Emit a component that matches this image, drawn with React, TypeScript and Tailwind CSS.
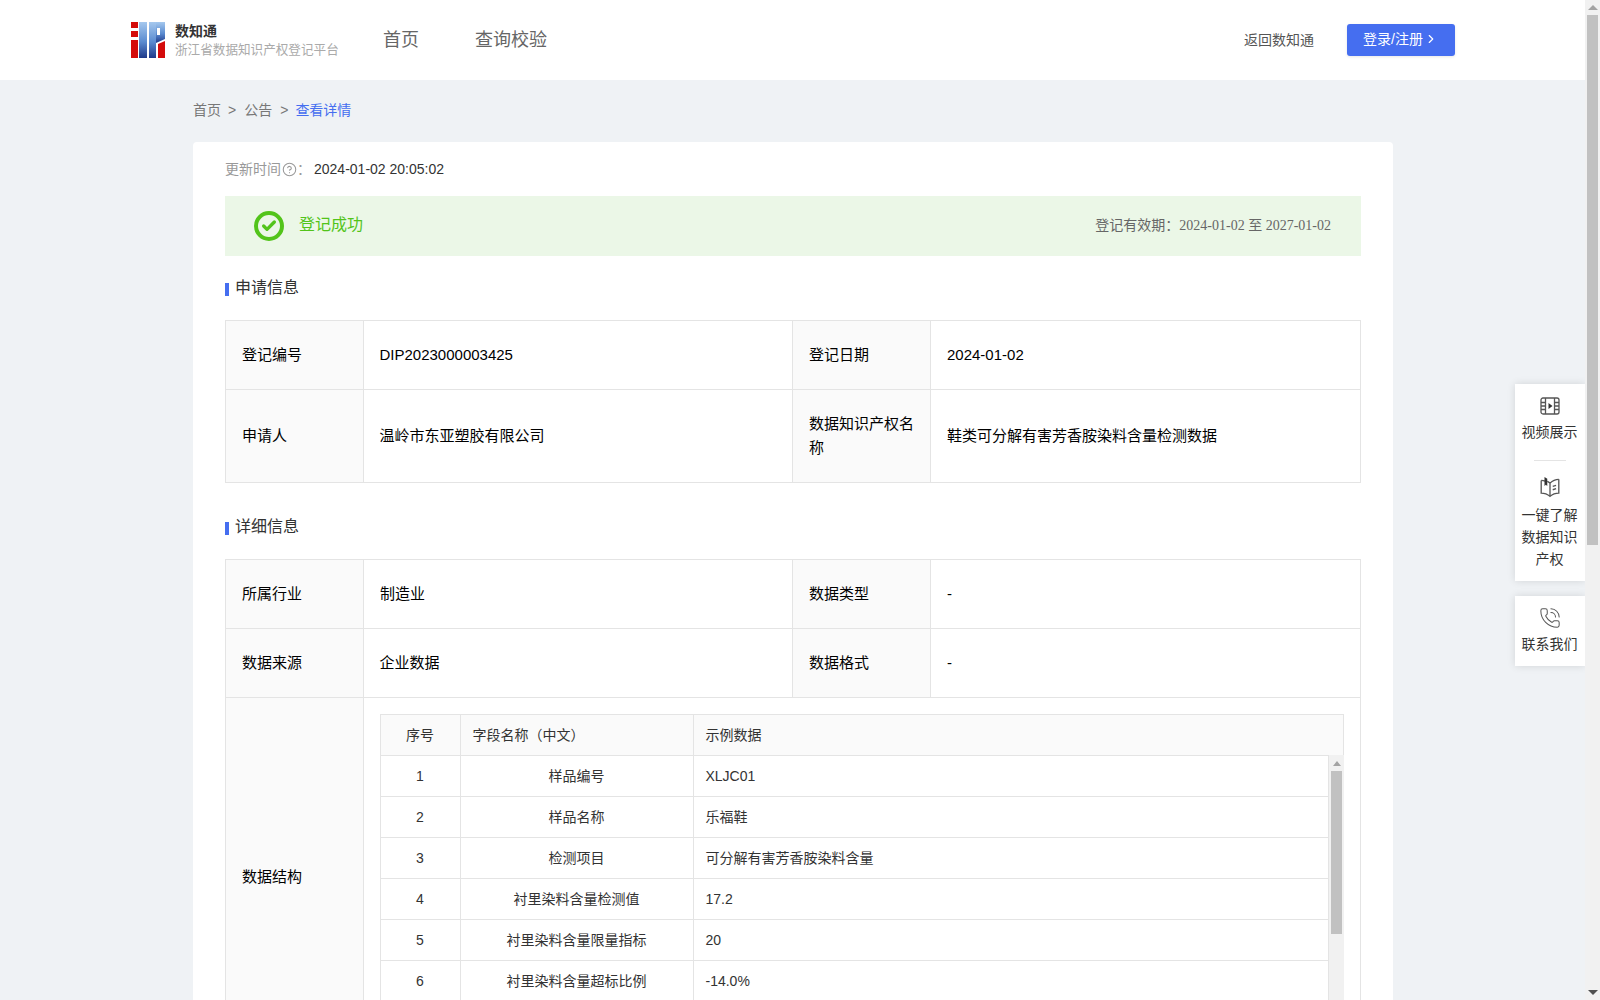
import { ChevronRight, Check, CircleHelp, PhoneCall } from "lucide-react";

const font = "font-['Liberation_Sans','Noto_Sans_CJK_SC',sans-serif]";

const sampleRows = [
  ["1", "样品编号", "XLJC01"],
  ["2", "样品名称", "乐福鞋"],
  ["3", "检测项目", "可分解有害芳香胺染料含量"],
  ["4", "衬里染料含量检测值", "17.2"],
  ["5", "衬里染料含量限量指标", "20"],
  ["6", "衬里染料含量超标比例", "-14.0%"],
];

function Logo() {
  return (
    <svg width="35" height="36" viewBox="0 0 35 36" className="shrink-0">
      <defs>
        <linearGradient id="lb" x1="0" y1="0" x2="0" y2="1">
          <stop offset="0" stopColor="#a5c8ee" />
          <stop offset="0.55" stopColor="#5a8bd0" />
          <stop offset="1" stopColor="#1f3a8a" />
        </linearGradient>
      </defs>
      <rect x="0" y="0" width="7" height="6" fill="#d40b0b" />
      <rect x="0" y="9" width="7" height="6" fill="#d40b0b" />
      <rect x="0" y="18" width="7" height="18" fill="#d40b0b" />
      <rect x="8" y="0" width="8" height="36" fill="url(#lb)" />
      <rect x="18" y="0" width="7" height="36" fill="url(#lb)" />
      <path d="M25 0h9v17l-9 4zM26 6v7h3V6z" fill="url(#lb)" fillRule="evenodd" />
      <path d="M27 36V22l7-3v17z" fill="#d40b0b" />
    </svg>
  );
}

function SectionTitle({ children, className }: { children: string; className: string }) {
  return (
    <div className={"flex items-center gap-[6px] text-base leading-6 text-[#333] " + className}>
      <span className="w-1 h-[13px] bg-[#456ef0] mt-[2px]"></span>
      <span>{children}</span>
    </div>
  );
}

function Cell({ label, tight, children }: { label?: boolean; tight?: boolean; children: string }) {
  return (
    <td className={"border border-[#e4e4e4] pb-[1px] pr-4 " + (tight ? "pl-[15.5px] " : "pl-4 ") + (label ? "bg-[#fafafa]" : "")}>{children}</td>
  );
}

function PageScrollbar() {
  return (
    <div className="w-[15px] h-full shrink-0 bg-[#f1f1f1] flex flex-col items-center relative">
      <div className="h-[15px] w-full flex items-center justify-center">
        <div className="w-0 h-0 border-x-[5px] border-x-transparent border-b-[5px] border-b-[#a3a3a3]"></div>
      </div>
      <div className="w-[11px] h-[530px] bg-[#c1c1c1]"></div>
      <div className="mt-auto h-[15px] w-full flex items-center justify-center">
        <div className="w-0 h-0 border-x-[5px] border-x-transparent border-t-[5px] border-t-[#505050]"></div>
      </div>
    </div>
  );
}

function SideButtons() {
  return (
    <div className="absolute right-0 top-[384px] w-[70px] flex flex-col gap-[15px] pr-[1px] text-sm leading-[22px] text-[#333] text-center">
      <div className="bg-white shadow-[0_0_8px_rgba(0,0,0,0.12)] -mr-[1px] pr-[1px] pt-[13px] pb-[11px]">
        <svg width="20" height="18" viewBox="0 0 20 18" fill="none" stroke="#555" strokeWidth="1.3" className="mx-auto">
          <rect x="1" y="1" width="18" height="16" rx="2" />
          <path d="M5.500 1v16M14.500 1v16M1 5.500h4.500M1 9h4.500M1 12.500h4.500M14.500 5.500H19M14.500 9H19M14.500 12.500H19" />
          <path d="M8.500 6l4 3-4 3z" fill="#333" stroke="none" />
        </svg>
        <div className="mt-[6px]">视频展示</div>
        <div className="w-8 h-px bg-[#e4e4e4] mx-auto mt-[17px] mb-[15px]"></div>
        <svg width="22" height="22" viewBox="0 0 20 20" fill="none" stroke="#555" strokeWidth="1.2" className="mx-auto">
          <path d="M2 4c1.500 0 2.500.2 3.500.6M18 3c-3 0-5.500 1-8 3.500C9 5.500 8 5 7.500 4.800" />
          <path d="M2 4v11.500c3 0 5.500.8 8 3 2.500-2.200 5-3 8-3V3" />
          <path d="M10 6.500v12M12.500 9.500l3-1M12.500 12.500l3-1" />
          <path d="M5 1l2.500 1.500v6.500L6.200 8 5 9z" fill="#333" stroke="none" />
        </svg>
        <div className="mt-[6px]">一键了解<br />数据知识<br />产权</div>
      </div>
      <div className="bg-white shadow-[0_0_8px_rgba(0,0,0,0.12)] -mr-[1px] pr-[1px] pt-[11px] pb-[11px]">
        <PhoneCall className="w-[22px] h-[22px] mx-auto text-[#555]" strokeWidth={1.1} />
        <div className="mt-[4px]">联系我们</div>
      </div>
    </div>
  );
}

export default function App() {
  return (
    <div className={"h-screen flex overflow-hidden bg-[#eff2f5] " + font}>
      <div className="flex-1 min-w-0 relative overflow-hidden">
        <header className="h-20 bg-white flex items-center pl-[131px] pr-[130px]">
          <Logo />
          <div className="ml-[9px] w-[165px] mb-[1px]">
            <div className="text-sm leading-5 font-bold text-[#333]">数知通</div>
            <div className="text-[12.6px] leading-[18px] text-[#aaa] whitespace-nowrap">浙江省数据知识产权登记平台</div>
          </div>
          <nav className="flex gap-[56px] ml-[43px] text-lg text-[#666]">
            <span>首页</span>
            <span>查询校验</span>
          </nav>
          <span className="ml-auto text-sm text-[#555] pb-[1px]">返回数知通</span>
          <button className="ml-[33px] w-[108px] h-8 bg-[#456ef0] rounded-[3px] text-white text-sm flex items-center justify-center gap-[1px] pb-[2px] pr-[1px] shadow-[0_1px_3px_rgba(0,0,0,0.1)]">
            登录/注册
            <ChevronRight className="w-[14px] h-[14px]" strokeWidth={2} />
          </button>
        </header>

        <main className="ml-[193px] w-[1200px]">
          <div className="h-[62px] flex items-center gap-2 -ml-px pb-[2px] text-sm text-[#777]">
            <span className="ml-px -mr-px">首页</span>
            <span>&gt;</span>
            <span>公告</span>
            <span>&gt;</span>
            <span className="text-[#456ef0] -ml-px">查看详情</span>
          </div>

          <div className="bg-white rounded px-8 pt-[16px] pb-8">
            <div className="flex items-center text-sm leading-[22px] text-[#999]">
              <span>更新时间</span>
              <CircleHelp className="w-[15px] h-[15px] ml-[1px]" strokeWidth={1.7} />
              <span>：</span>
              <span className="text-[#333] ml-[3px]">2024-01-02 20:05:02</span>
            </div>

            <div className="mt-[16px] h-[60px] bg-[#ebf7e7] flex items-center pl-[29px] pr-[30px]">
              <div className="w-[30px] h-[30px] rounded-full border-[4px] border-[#52c41a] flex items-center justify-center">
                <Check className="w-[16px] h-[16px] text-[#52c41a]" strokeWidth={5} />
              </div>
              <span className="ml-[15px] mb-[2px] text-base text-[#52c41a]">登记成功</span>
              <span className="ml-auto mb-[2px] text-sm text-[#666]">
                登记有效期：<span className="font-['Liberation_Serif','Noto_Sans_CJK_SC',serif]">2024-01-02 至 2027-01-02</span>
              </span>
            </div>

            <SectionTitle className="mt-[20px] mb-[20px]">申请信息</SectionTitle>

            <table className="w-[1136px] table-fixed border-collapse text-[15px] leading-6 text-black">
              <colgroup>
                <col className="w-[138px]" />
                <col className="w-[429px]" />
                <col className="w-[138px]" />
                <col />
              </colgroup>
              <tbody>
                <tr className="h-[69px]">
                  <Cell label>登记编号</Cell>
                  <Cell tight>DIP2023000003425</Cell>
                  <Cell label>登记日期</Cell>
                  <Cell>2024-01-02</Cell>
                </tr>
                <tr className="h-[93px]">
                  <Cell label>申请人</Cell>
                  <Cell tight>温岭市东亚塑胶有限公司</Cell>
                  <Cell label>数据知识产权名称</Cell>
                  <Cell>鞋类可分解有害芳香胺染料含量检测数据</Cell>
                </tr>
              </tbody>
            </table>

            <SectionTitle className="mt-[32px] mb-[20px]">详细信息</SectionTitle>

            <table className="w-[1136px] table-fixed border-collapse text-[15px] leading-6 text-black">
              <colgroup>
                <col className="w-[138px]" />
                <col className="w-[429px]" />
                <col className="w-[138px]" />
                <col />
              </colgroup>
              <tbody>
                <tr className="h-[69px]">
                  <Cell label>所属行业</Cell>
                  <Cell>制造业</Cell>
                  <Cell label>数据类型</Cell>
                  <Cell>-</Cell>
                </tr>
                <tr className="h-[69px]">
                  <Cell label>数据来源</Cell>
                  <Cell tight>企业数据</Cell>
                  <Cell label>数据格式</Cell>
                  <Cell>-</Cell>
                </tr>
                <tr>
                  <Cell label>数据结构</Cell>
                  <td colSpan={3} className="border border-[#e4e4e4] p-4">
                    <table className="w-[964px] table-fixed border-collapse text-sm text-[#333]">
                      <colgroup>
                        <col className="w-[80px]" />
                        <col className="w-[233px]" />
                        <col />
                      </colgroup>
                      <thead>
                        <tr className="h-[41px] bg-[#fafafa]">
                          <th className="border border-[#e4e4e4] font-normal pr-[1px]">序号</th>
                          <th className="border border-[#e4e4e4] font-normal text-left pl-[11.5px] pb-[1px]">字段名称（中文）</th>
                          <th className="border border-[#e4e4e4] font-normal text-left pl-[11.5px] pb-[1px]">示例数据</th>
                        </tr>
                      </thead>
                    </table>
                    <div className="flex w-[964px] h-[286px] -mt-px overflow-hidden">
                      <div className="flex-1 min-w-0">
                        <table className="w-full table-fixed border-collapse text-sm text-[#333]">
                          <colgroup>
                            <col className="w-[80px]" />
                            <col className="w-[233px]" />
                            <col />
                          </colgroup>
                          <tbody>
                            {sampleRows.map((row) => (
                              <tr key={row[0]} className="h-[41px]">
                                <td className="border border-[#e4e4e4] text-center pr-[1px]">{row[0]}</td>
                                <td className="border border-[#e4e4e4] text-center pr-[1px]">{row[1]}</td>
                                <td className="border border-[#e4e4e4] pl-[11.5px]">{row[2]}</td>
                              </tr>
                            ))}
                          </tbody>
                        </table>
                      </div>
                      <div className="w-[15px] shrink-0 bg-[#f1f1f1] flex flex-col items-center">
                        <div className="h-[16px] flex items-center">
                          <div className="w-0 h-0 border-x-[4px] border-x-transparent border-b-[5px] border-b-[#a3a3a3]"></div>
                        </div>
                        <div className="w-[11px] h-[163px] bg-[#c1c1c1]"></div>
                      </div>
                    </div>
                  </td>
                </tr>
              </tbody>
            </table>
          </div>
        </main>

        <SideButtons />
      </div>
      <PageScrollbar />
    </div>
  );
}
